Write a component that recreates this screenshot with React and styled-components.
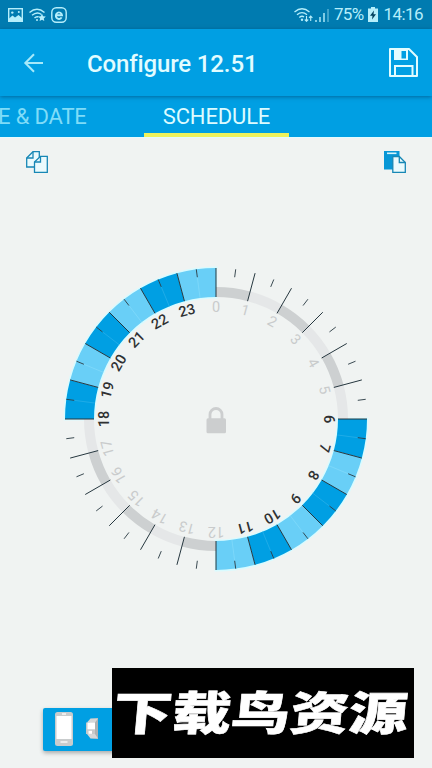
import styled, { createGlobalStyle } from 'styled-components';

const GlobalStyle = createGlobalStyle`
    * {
        box-sizing: border-box;
    }
    body {
        margin: 0;
        background-color: #f0f3f2;
        font-family: Roboto, "Liberation Sans", sans-serif;
    }
`;

const Screen = styled.div`
    position: relative;
    display: flex;
    flex-direction: column;
    width: 432px;
    height: 768px;
    overflow: hidden;
    background-color: #f0f3f2;
`;
const StatusBar = styled.div`
    display: flex;
    justify-content: space-between;
    align-items: center;
    height: 29px;
    padding: 0 9px 0 8px;
    background-color: #007bb0;
    color: #b5eefb;
`;
const StatusGroup = styled.div`
    display: flex;
    align-items: center;
    gap: ${({ $gap }) => $gap}px;
`;
const StatusText = styled.span`
    font-size: 17px;
    line-height: 31px;
    letter-spacing: ${({ $spacing }) => $spacing || 0}px;
    white-space: nowrap;
`;
const Toolbar = styled.header`
    position: relative;
    z-index: 1;
    display: flex;
    align-items: center;
    height: 67px;
    padding: 0 14px 0 23px;
    background-color: #009fe3;
    box-shadow: 0 1px 4px rgba(0, 50, 90, 0.5);
`;
const Title = styled.h1`
    margin: 2px auto 0 43px;
    color: #e2fcff;
    font-size: 24px;
    font-weight: 500;
    line-height: 30px;
    letter-spacing: -0.14px;
    white-space: nowrap;
`;
const Tabs = styled.nav`
    display: flex;
    height: 42px;
    background-color: #009fe3;
    border-bottom: 1px solid #e4fbff;
`;
const Tab = styled.div`
    display: flex;
    justify-content: ${({ $active }) => ($active ? 'center' : 'flex-start')};
    width: ${({ $width }) => $width}px;
    border-bottom: 4px solid ${({ $active }) => ($active ? '#eef25c' : 'transparent')};
    color: ${({ $active }) => ($active ? '#dcfbff' : '#7fdcf8')};
    font-size: 22px;
    line-height: 41px;
    letter-spacing: -0.15px;
    text-indent: ${({ $active }) => ($active ? 0 : -2)}px;
    white-space: nowrap;
`;
const Actions = styled.div`
    display: flex;
    justify-content: space-between;
    padding: 13px 26px 0;
`;
const DialArea = styled.main`
    display: flex;
    justify-content: center;
    padding-top: 90px;
`;
const DialSvg = styled.svg`
    display: block;
    width: 312px;
    height: 312px;
`;
const HourLabel = styled.text`
    fill: ${({ $active }) => ($active ? '#2f3132' : '#c9cbcc')};
    font-family: Roboto, "Liberation Sans", sans-serif;
    font-size: 14.5px;
    font-weight: ${({ $active }) => ($active ? 500 : 400)};
    text-anchor: middle;
`;
const SyncBar = styled.div`
    display: flex;
    align-items: center;
    gap: 13px;
    height: 43px;
    margin: auto 43px 17px;
    padding: 0 0 2px 12px;
    border-radius: 2px;
    background-color: #009fe3;
    box-shadow: 0 2px 4px rgba(0, 0, 0, 0.3);
`;
const Banner = styled.div`
    position: absolute;
    left: 112px;
    top: 668px;
    display: flex;
    align-items: center;
    justify-content: center;
    width: 302px;
    height: 90px;
    padding: 0 5px 6px 0;
    background-color: #000;
`;
const BannerText = styled.span`
    color: #fff;
    font-family: "Noto Sans CJK SC", sans-serif;
    font-size: 46px;
    font-weight: 900;
    line-height: 84px;
    white-space: nowrap;
    -webkit-text-stroke: 0.6px #fff;
    transform: scaleX(1.28) skewX(-4deg);
`;

const CX = 156;
const OUTER = 151;
const INNER = 122;

const hours = Array.from({ length: 24 }, (_, h) => h);
const isActive = (h) => (h >= 6 && h < 12) || h >= 18;

const point = (hour, r) => {
    const a = (hour * Math.PI) / 12;
    return [CX + r * Math.sin(a), CX - r * Math.cos(a)];
};

const segment = (start, end, r1, r2) =>
    `M${point(start, r1)} A${r1} ${r1} 0 0 1 ${point(end, r1)} L${point(end, r2)} A${r2} ${r2} 0 0 0 ${point(start, r2)}Z`;

const segmentColor = (h) => {
    if (isActive(h)) return h % 2 ? '#69cff7' : '#009fe3';
    return h % 2 ? '#e5e7e8' : '#cdd0d1';
};

const Tick = ({ hour, from, to, color = '#26373f', width = 1 }) => {
    const [x1, y1] = point(hour, from);
    const [x2, y2] = point(hour, to);
    return <line x1={x1} y1={y1} x2={x2} y2={y2} stroke={color} strokeWidth={width} />;
};

const Dial = () => (
    <DialSvg viewBox="0 0 312 312">
        {[6, 18].map(h => (
            <path
                key={h}
                d={segment(h, h + 6, OUTER, INNER)}
                fill="none"
                stroke="#d9fbff"
                strokeWidth="3"
            />
        ))}
        {hours.map(h => (
            <path key={h} d={segment(h, h + 1, isActive(h) ? OUTER : INNER + 10, INNER)} fill={segmentColor(h)} />
        ))}
        {hours.map(h => (
            <g key={h}>
                {isActive(h) && (
                    <Tick hour={h + 0.5} from={INNER} to={OUTER} color={h % 2 ? '#80d9fa' : '#27aee9'} width={0.8} />
                )}
                <Tick hour={h} from={INNER} to={OUTER} />
                <Tick hour={h + 0.5} from={143} to={OUTER} width={0.9} />
                <HourLabel
                    $active={isActive(h)}
                    x={CX}
                    y={CX - 107.5}
                    transform={`rotate(${h * 15} ${CX} ${CX})`}
                >
                    {h}
                </HourLabel>
            </g>
        ))}
        <path d="M150 156v-4.500a6 6 0 0 1 12 0v4.500" fill="none" stroke="#cccecf" strokeWidth="2.800" />
        <rect x="146.500" y="155.300" width="19.500" height="15" rx="1.500" fill="#cccecf" />
    </DialSvg>
);

const ImageIcon = () => (
    <svg width="15" height="14" viewBox="0 0 15 14">
        <rect x="0.700" y="0.700" width="13.600" height="12.600" fill="none" stroke="currentColor" strokeWidth="1.400" />
        <path d="M1 10.500l3.500-3 2.500 2 3.500-2.500 3.500 3v3H1z" fill="currentColor" />
        <circle cx="4.300" cy="4.600" r="1.200" fill="currentColor" />
        <circle cx="10.800" cy="4" r="1" fill="currentColor" />
    </svg>
);

const WifiStarIcon = () => (
    <svg width="17" height="14" viewBox="0 0 17 14" fill="none" stroke="currentColor" strokeWidth="1.400">
        <path d="M.5 4.500Q8 -2 15.500 4.500M3 7.300Q8 3 12.500 6.500M5.500 10Q7.500 8 9.500 9" />
        <circle cx="8" cy="12" r="1" fill="currentColor" stroke="none" />
        <path d="M13 5.800l1.100 2.400 2.700.3-2 1.900.5 2.700-2.300-1.300-2.400 1.300.5-2.700-2-1.900 2.700-.3z" fill="currentColor" stroke="none" />
    </svg>
);

const BadgeIcon = () => (
    <svg width="16" height="16" viewBox="0 0 16 16" fill="none" stroke="currentColor">
        <rect x="0.800" y="0.800" width="14.400" height="14.400" rx="4.500" strokeWidth="1.400" />
        <path d="M5 8.200h6A3.100 3.300 0 1 0 10.600 10.400" strokeWidth="1.900" />
    </svg>
);

const WifiSyncIcon = () => (
    <svg width="19" height="14" viewBox="0 0 19 14" fill="none" stroke="currentColor" strokeWidth="1.300">
        <path d="M.5 4Q8 -2.500 15.500 4M3 6.800Q8 2.500 13 6.800M5.300 9.500Q8 7.200 10 9" />
        <circle cx="8" cy="11.800" r="1.200" fill="currentColor" stroke="none" />
        <path d="M12.500 8v5M10.800 11.500l1.700 1.800 1.700-1.800M16.700 13V8M15 9.800l1.700-1.800 1.700 1.800" strokeWidth="1.100" />
    </svg>
);

const SignalIcon = () => (
    <svg width="14" height="14" viewBox="0 0 14 14" stroke="currentColor" strokeWidth="1.400">
        <path d="M1 14v-2M5 14V9M9 14V5" />
        <path d="M13 14V1" opacity="0.5" />
    </svg>
);

const BatteryIcon = () => (
    <svg width="10" height="15" viewBox="0 0 10 15">
        <path d="M3 0h4v1.500h3V15H0V1.500h3z" fill="currentColor" />
        <path d="M6 3.500L2 8.700h2.500L4 12.500l4-5.200H5.500z" fill="#00405e" />
    </svg>
);

const BackIcon = () => (
    <svg width="21" height="20" viewBox="0 0 21 20" fill="none" stroke="#a6e9fa" strokeWidth="2">
        <path d="M20 10H2.500M11 1.300L2.300 10l8.700 8.700" />
    </svg>
);

const SaveIcon = () => (
    <svg width="29" height="29" viewBox="0 0 29 29" fill="none" stroke="#e2fcff" strokeWidth="2">
        <path d="M1 1h19l8 8v19H1z" strokeLinejoin="round" />
        <path d="M5 1h14v11H5z" fill="#e2fcff" stroke="none" />
        <path d="M12.500 3h4.500v7.500h-4.500z" fill="#009fe3" stroke="none" />
        <path d="M6 28V18h17.500V28" />
    </svg>
);

const CopyIcon = () => (
    <svg width="22" height="22" viewBox="0 0 22 22" fill="#eafafd" stroke="#1787b5" strokeWidth="1.300">
        <path d="M.7 7L7 .7h6.300V16H.7z" />
        <path d="M.7 7H7V.7" fill="none" />
        <path d="M8.500 11L14.500 5.300h6.800v16H8.500z" />
        <path d="M8.500 11h6V5.300" fill="none" />
    </svg>
);

const PasteIcon = () => (
    <svg width="22" height="22" viewBox="0 0 22 22">
        <path d="M0 0h15.500v18.500H0z" fill="#0797d6" />
        <path d="M3 1.500h9.500v1.600H3z" fill="#d5f4fc" />
        <path d="M8.800 5.500h6.500l6 6v9.800H8.800z" fill="#eafafd" stroke="#1787b5" strokeWidth="1.300" />
        <path d="M15.300 5.500v6h6" fill="none" stroke="#1787b5" strokeWidth="1.300" />
    </svg>
);

const PhoneIcon = () => (
    <svg width="18" height="34" viewBox="0 0 18 34">
        <rect width="18" height="34" rx="2.500" fill="#c9cccd" />
        <path d="M1.500 4h15v23h-15z" fill="#fff" />
        <path d="M7 2h4M5.500 30h7" stroke="#f6f8f8" strokeWidth="1.300" />
    </svg>
);

const DeviceIcon = () => (
    <svg width="13" height="21" viewBox="0 0 13 21">
        <path d="M4 1l8-1v21L4 20z" fill="#adb1b2" />
        <path d="M1 4.500L4.500.5H12L9 4.500zM1 16l3.500 4.500H12L9 16z" fill="#d5d7d8" />
        <path d="M0 4.500h9V16H0z" fill="#c6c9ca" />
        <path d="M1.500 4.500H9v6.800H1.500z" fill="#fff" />
        <path d="M2.500 12.800H6v3H2.500z" fill="#fff" />
    </svg>
);

const App = () => (
    <>
        <GlobalStyle />
        <Screen>
            <StatusBar>
                <StatusGroup $gap={5.5}>
                    <ImageIcon />
                    <WifiStarIcon />
                    <BadgeIcon />
                </StatusGroup>
                <StatusGroup $gap={5}>
                    <StatusGroup $gap={2}>
                        <WifiSyncIcon />
                        <SignalIcon />
                    </StatusGroup>
                    <StatusText $spacing={-0.7}>75%</StatusText>
                    <BatteryIcon />
                    <StatusText $spacing={-0.55}>14:16</StatusText>
                </StatusGroup>
            </StatusBar>
            <Toolbar>
                <BackIcon />
                <Title>Configure 12.51</Title>
                <SaveIcon />
            </Toolbar>
            <Tabs>
                <Tab $width={144}>E &amp; DATE</Tab>
                <Tab $width={145} $active>SCHEDULE</Tab>
            </Tabs>
            <Actions>
                <CopyIcon />
                <PasteIcon />
            </Actions>
            <DialArea>
                <Dial />
            </DialArea>
            <SyncBar>
                <PhoneIcon />
                <DeviceIcon />
            </SyncBar>
            <Banner>
                <BannerText>下载鸟资源</BannerText>
            </Banner>
        </Screen>
    </>
);

export default App;
